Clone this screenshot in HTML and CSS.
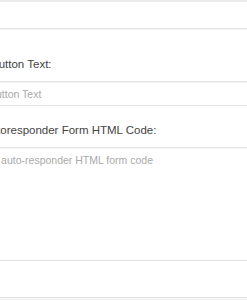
FILE: index.html
```html
<!DOCTYPE html>
<html lang="en">
<head>
    <meta charset="UTF-8">
    <meta name="viewport" content="width=device-width, initial-scale=1.0">
    <title>Opt-in Form</title>
    <link rel="stylesheet" href="styles.css">
</head>
<body>
    <div class="panel">
        <div class="prev-field"></div>
        <div class="divider"></div>

        <div class="field">
            <label for="button-text">Button Text:</label>
            <input type="text" id="button-text" placeholder="Button Text">
        </div>

        <div class="field field-code">
            <label for="ar-code">Autoresponder Form HTML Code:</label>
            <textarea id="ar-code" placeholder="Paste your auto-responder HTML form code"></textarea>
        </div>

        <div class="next-field"></div>
    </div>
</body>
</html>
```

FILE: styles.css
```css
body {
    margin: 0;
    padding: 0;
    background-color: #ffffff;
    font-family: "Liberation Sans", Arial, sans-serif;
    overflow: hidden;
}

.panel {
    margin-left: -9px;
    margin-right: -10px;
}

.prev-field {
    height: 2px;
    background-color: #ececec;
}

.divider {
    margin-top: 26px;
    border-top: 1px solid #e4e4e4;
    box-shadow: 0 1px 1px rgba(0,0,0,0.04);
}

.field {
    margin-top: 27px;
}

.field + .field {
    margin-top: 16px;
}

.field label {
    display: block;
    font-size: 11.5px;
    color: #444;
    line-height: 16px;
    margin-bottom: 9px;
}

.field-code label {
    text-indent: -8px;
}

.field input,
.field textarea {
    display: block;
    box-sizing: border-box;
    width: 100%;
    margin: 0;
    font-family: "Liberation Sans", Arial, sans-serif;
    font-size: 10.5px;
    color: #555;
    background-color: #fff;
    border: 1px solid #e3e3e3;
    border-left: none;
    border-right: none;
    box-shadow: inset 0 1px 1px rgba(0,0,0,0.05);
    outline: none;
}

.field input {
    height: 25px;
    padding: 0;
    text-indent: -2px;
}

.field textarea {
    height: 114px;
    padding: 6px 0 0 0;
    resize: none;
    text-indent: -43px;
}

.field input::placeholder,
.field textarea::placeholder {
    color: #aaa;
}

.next-field {
    margin-top: 36px;
    height: 3px;
    border-top: 1px solid #e2e2e2;
    background-color: #f4f4f4;
}
```
